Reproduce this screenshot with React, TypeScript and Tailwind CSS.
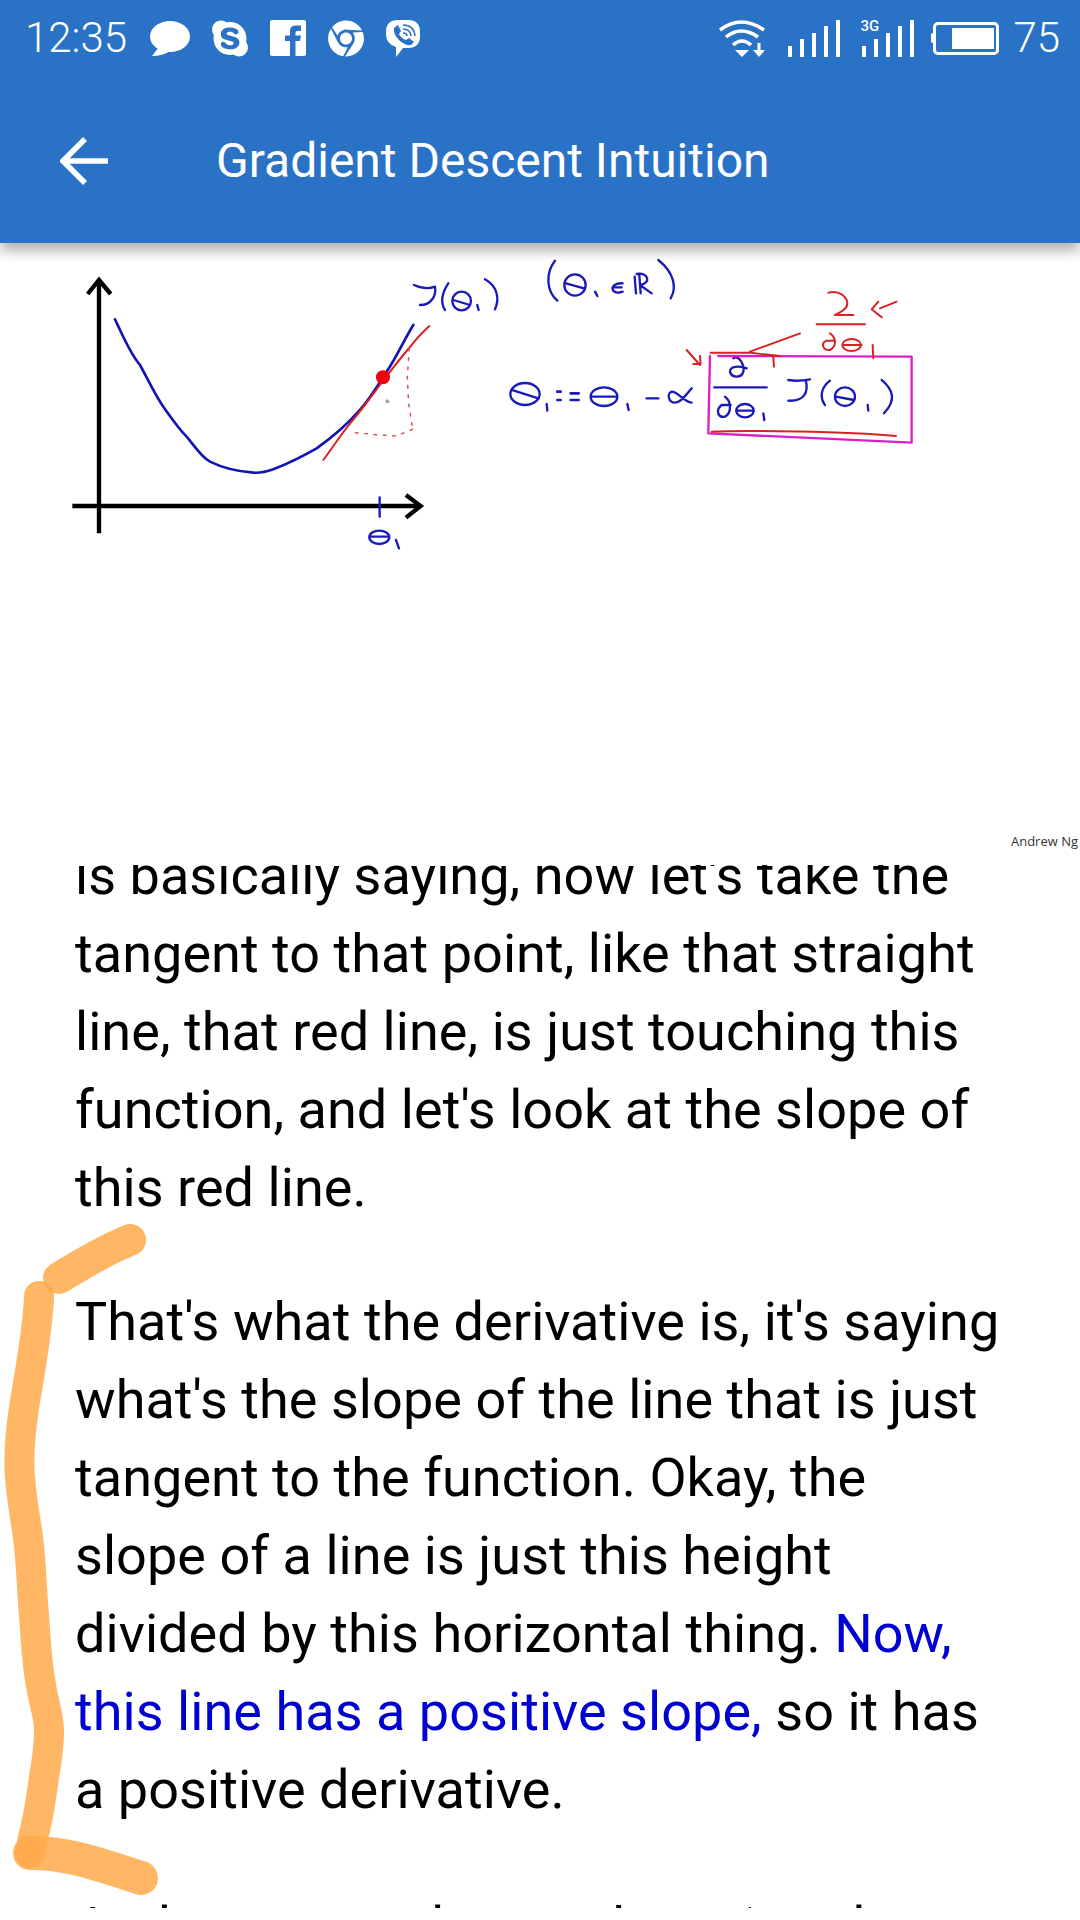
import { ReactNode } from 'react';
import { FaSkype, FaChrome } from 'react-icons/fa';

// status bar glyphs
const StatusIconsLeft = () => (
  <div className="ml-[23px] flex items-center gap-[22px]">
    {/* message bubble */}
    <svg width="40" height="35" viewBox="0 0 40 35" fill="white">
      <ellipse cx="20" cy="15.5" rx="20" ry="15.5" />
      <path d="M9 26 L2 35 Q13 35 20 30 Z" />
    </svg>
    <span className="flex h-[36px] w-[36px] items-center justify-center">
      <FaSkype size={41} color="white" />
    </span>
    {/* facebook */}
    <svg width="36" height="36" viewBox="0 0 36 36">
      <rect width="36" height="36" rx="2" fill="white" />
      <path d="M20 36 V21 H15 V15.5 H20 V11 Q20 5.5 26 5.5 H31 V11 H27 Q25.5 11 25.5 13 V15.5 H31 L30 21 H25.5 V36 Z" fill="#2a72c6" />
    </svg>
    <span className="flex h-[36px] w-[36px] items-center justify-center">
      <FaChrome size={37} color="white" />
    </span>
    {/* viber */}
    <svg width="34" height="37" viewBox="0 0 34 37">
      <path d="M12 0 H22 Q34 0 34 12 V16 Q34 28 22 28 H17 L10 37 V27 Q0 24 0 14 V12 Q0 0 12 0 Z" fill="white" />
      <path d="M8 8 L12 5 L15 11 L13 14 Q15 18 20 20 L23 18 L28 22 L25 25 Q19 26 13 20 Q7 14 8 8 Z" fill="#2a72c6" />
      <path d="M17 5 Q28 5 29 16 M17 9 Q24 9 25 16 M17 13 Q21 13 21 16" fill="none" stroke="#2a72c6" strokeWidth="1.6" />
    </svg>
  </div>
);

const SignalBars = ({ label }: { label?: ReactNode }) => (
  <div className="relative flex h-[37px] items-end gap-[8px]">
    {label}
    <span className="h-[11px] w-[4px] bg-white" />
    <span className="h-[18px] w-[4px] bg-white" />
    <span className="h-[24px] w-[4px] bg-white" />
    <span className="h-[31px] w-[4px] bg-white" />
    <span className="h-[37px] w-[4px] bg-white" />
  </div>
);

const StatusIconsRight = () => (
  <div className="flex items-center">
    {/* wifi with download arrow */}
    <svg width="48" height="38" viewBox="0 0 48 38" fill="none" stroke="white" strokeWidth="3.5">
      <path d="M2 11 Q23 -5 46 11" />
      <path d="M8 18 Q23 6 40 18" />
      <path d="M15 26 Q24 18 33 26" />
      <path d="M17 31 H31 L24 38 Z" fill="white" stroke="none" />
      <path d="M41 24 V33" strokeWidth="3" />
      <path d="M35 31 H47 L41 38 Z" fill="white" stroke="none" />
    </svg>
    <div className="ml-[22px]">
      <SignalBars />
    </div>
    <div className="ml-[22px]">
      <SignalBars
        label={
          <span className="absolute left-[-2px] top-[-1px] text-[15px] font-medium leading-[15px] text-white">3G</span>
        }
      />
    </div>
    {/* battery */}
    <div className="ml-[17px] flex items-center">
      <span className="h-[10px] w-[2px] rounded-l-sm bg-white" />
      <div className="flex h-[33px] w-[66px] items-center justify-end rounded-[5px] border-[3px] border-white pr-[2px]">
        <span className="h-[21px] w-[42px] bg-white" />
      </div>
    </div>
    <span className="ml-[14px] text-[42px] font-light leading-none text-white">75</span>
  </div>
);

// the lecture slide at the top, coordinates taken from the slide image itself
const Slide = () => (
  <svg className="block h-[622px] w-full blur-[0.5px]" viewBox="0 243 1080 622" fill="none" strokeLinecap="round" strokeLinejoin="round">
    <g transform="translate(40 250) scale(0.3333)">
      <g stroke="#000" strokeWidth="13" strokeLinecap="butt" strokeLinejoin="miter">
        <path d="M177 90 V850" />
        <path d="M143 132 L177 90 L212 132" />
        <path d="M97 768 H1142" />
        <path d="M1098 735 L1142 768 L1098 803" />
      </g>
      <path
        d="M225 208 C250 260 270 310 300 345 C325 390 345 435 370 470 C395 505 415 535 440 560 C465 590 485 622 510 635 C550 655 600 665 640 668 C665 670 680 665 700 658 C745 640 790 618 830 595 C880 560 925 520 960 480 C990 445 1015 405 1040 365 C1065 330 1095 265 1120 225"
        stroke="#1414b4"
        strokeWidth="8"
      />
      <path
        d="M850 630 C880 590 905 550 935 515 C965 480 990 445 1020 405 C1050 365 1085 320 1115 285 C1130 265 1150 245 1168 228"
        stroke="#e02020"
        strokeWidth="6"
      />
      <path d="M1108 295 L1102 380 L1106 460 L1118 538 M1118 538 L1070 558 L1020 555 L930 547" stroke="#e05050" strokeWidth="4.5" strokeDasharray="8 20" />
      <circle cx="1029" cy="382" r="21" fill="#f00010" />
      <circle cx="1042" cy="454" r="6" fill="#b8a0a0" />
      <g stroke="#1a1ab8" strokeWidth="7">
        <path d="M1019 742 V800" />
        <ellipse cx="1018" cy="862" rx="30" ry="20" />
        <path d="M990 860 H1046" />
        <path d="M1068 870 L1077 895" />
        <path d="M1122 105 C1145 115 1165 118 1185 110 C1190 135 1175 165 1140 165" />
        <path d="M1225 100 C1205 130 1200 155 1215 180" />
        <ellipse cx="1265" cy="153" rx="28" ry="28" />
        <path d="M1240 150 L1290 165" />
        <path d="M1312 165 L1316 180" />
      </g>
    </g>
    <g transform="translate(480 250) scale(0.3333)">
      {/* formula in blue */}
      <g stroke="#1a1ab8" strokeWidth="7">
        <path d="M15 88 C55 110 58 150 45 178" />
        <path d="M225 32 C195 70 200 125 232 152" />
        <ellipse cx="285" cy="105" rx="32" ry="32" />
        <path d="M258 100 L312 115" />
        <path d="M345 125 L352 138" />
        <path d="M428 100 C405 98 395 110 398 118 C400 128 415 130 428 125 M398 112 H425" />
        <path d="M464 80 L468 130 M478 75 L482 130 M470 72 C505 65 515 100 480 105 L515 130" />
        <path d="M535 30 C585 70 590 115 572 145" />
        <ellipse cx="135" cy="432" rx="44" ry="33" />
        <path d="M95 420 L175 445" />
        <path d="M200 462 L202 482" />
        <path d="M232 425 L242 425 M232 450 L242 450" strokeWidth="8" />
        <path d="M272 430 H296 M272 450 H296" strokeWidth="8" />
        <ellipse cx="372" cy="440" rx="40" ry="28" />
        <path d="M335 440 H410" />
        <path d="M442 462 L446 480" />
        <path d="M500 445 H535" />
        <path d="M635 458 C610 455 595 425 575 425 C560 430 565 458 585 458 C605 458 620 430 635 415" />
        <path d="M760 325 C775 312 795 345 790 365 C785 385 755 385 750 365 C750 350 775 345 800 355" />
        <path d="M703 412 H860" />
        <path d="M735 440 C755 455 755 490 735 500 C715 505 705 480 725 465 L752 465" />
        <ellipse cx="795" cy="482" rx="26" ry="20" />
        <path d="M770 482 H820" />
        <path d="M850 490 L853 510" />
        <path d="M925 390 C950 395 970 392 990 388 M978 392 C985 425 975 455 925 452" />
        <path d="M1050 392 C1020 415 1020 445 1035 465" />
        <ellipse cx="1095" cy="440" rx="30" ry="28" />
        <path d="M1068 440 L1122 450" />
        <path d="M1163 465 L1165 482" />
        <path d="M1205 390 C1240 420 1250 450 1212 490" />
      </g>
      {/* magenta box */}
      <path d="M690 318 L685 550 L1295 578 L1295 320 L715 318" stroke="#d820c8" strokeWidth="7" />
      <g stroke="#dc2020" strokeWidth="6">
        <path d="M692 308 H810 C830 310 860 315 900 318" />
        <path d="M810 305 L960 250" />
        <path d="M880 322 L882 350" />
        <path d="M620 300 L660 345 M640 342 H662 L660 318" />
        <path d="M695 545 C800 540 1100 545 1248 558" />
        <path d="M1010 223 H1155" />
        <path d="M1045 128 C1080 120 1110 145 1100 170 C1090 185 1075 190 1065 195 L1120 195" />
        <path d="M1200 175 L1250 155 M1195 155 L1175 178 L1205 202" />
        <path d="M1050 250 C1070 265 1070 290 1050 300 C1030 302 1020 280 1040 272 L1065 272" />
        <ellipse cx="1115" cy="285" rx="28" ry="18" />
        <path d="M1090 285 H1145" />
        <path d="M1178 285 L1180 325" />
      </g>
    </g>
  </svg>
);

export default function App() {
  return (
    <div className="relative h-[1920px] w-[1080px] overflow-hidden bg-white font-['Roboto',sans-serif]">
      {/* App header */}
      <header className="relative z-10 h-[243px] bg-[#2a72c6] shadow-[0_8px_12px_rgba(0,0,0,0.3)]">
        <div className="flex h-[76px] items-center justify-between pl-[25px] pr-[20px]">
          <div className="flex items-center">
            <span className="text-[42px] font-light leading-none text-white">12:35</span>
            <StatusIconsLeft />
          </div>
          <StatusIconsRight />
        </div>
        <div className="flex h-[167px] items-center pt-[2px]">
          <svg className="ml-[60px]" width="48" height="48" viewBox="0 0 48 48" fill="none" stroke="white" strokeWidth="5.5">
            <path d="M48 24 H4" />
            <path d="M25 2 L3 24 L25 46" />
          </svg>
          <h1 className="ml-[108px] text-[48px] font-normal leading-none text-white">Gradient Descent Intuition</h1>
        </div>
      </header>

      {/* Slide */}
      <div className="relative h-[622px]">
        <Slide />
        <span className="absolute bottom-[17px] right-[2px] font-['Open_Sans',sans-serif] text-[13px] font-normal leading-none text-[#333]">
          Andrew Ng
        </span>
      </div>

      {/* Transcript, scrolled so its first line is cut by the slide */}
      <div className="h-[1043px] overflow-hidden">
        <div className="-mt-[28px] pl-[75px] pr-[40px] text-[54px] leading-[78px] tracking-[0.05px] text-black">
          <p className="mb-[56px]">
            is basically saying, now let's take the
            <br />
            tangent to that point, like that straight
            <br />
            line, that red line, is just touching this
            <br />
            function, and let's look at the slope of
            <br />
            this red line.
          </p>
          <p className="mb-[59px]">
            That's what the derivative is, it's saying
            <br />
            what's the slope of the line that is just
            <br />
            tangent to the function. Okay, the
            <br />
            slope of a line is just this height
            <br />
            divided by this horizontal thing. <span className="text-[#0000d0]">Now,</span>
            <br />
            <span className="text-[#0000d0]">this line has a positive slope,</span> so it has
            <br />a positive derivative.
          </p>
          <p>And so, my update to theta 1 and</p>
        </div>
      </div>

      {/* Hand-drawn highlight over the page */}
      <svg className="absolute left-0 top-0" width="1080" height="1920" viewBox="0 0 1080 1920" fill="none" strokeLinecap="round" strokeLinejoin="round">
        <g stroke="#ffa94a" strokeOpacity="0.85">
          <path d="M59 1278 C80 1265 105 1250 130 1240" strokeWidth="32" />
          <path
            d="M39 1296 C38 1330 30 1370 24 1408 C20 1435 18 1455 20 1477 C22 1505 27 1525 29 1546 C32 1575 32 1595 34 1615 C36 1645 37 1665 41 1685 C44 1705 49 1715 49 1731 C49 1750 46 1765 44 1777 C41 1800 38 1820 33 1837 L30 1853"
            strokeWidth="30"
          />
          <path d="M30 1853 C70 1853 100 1865 141 1878" strokeWidth="34" />
        </g>
      </svg>
    </div>
  );
}
